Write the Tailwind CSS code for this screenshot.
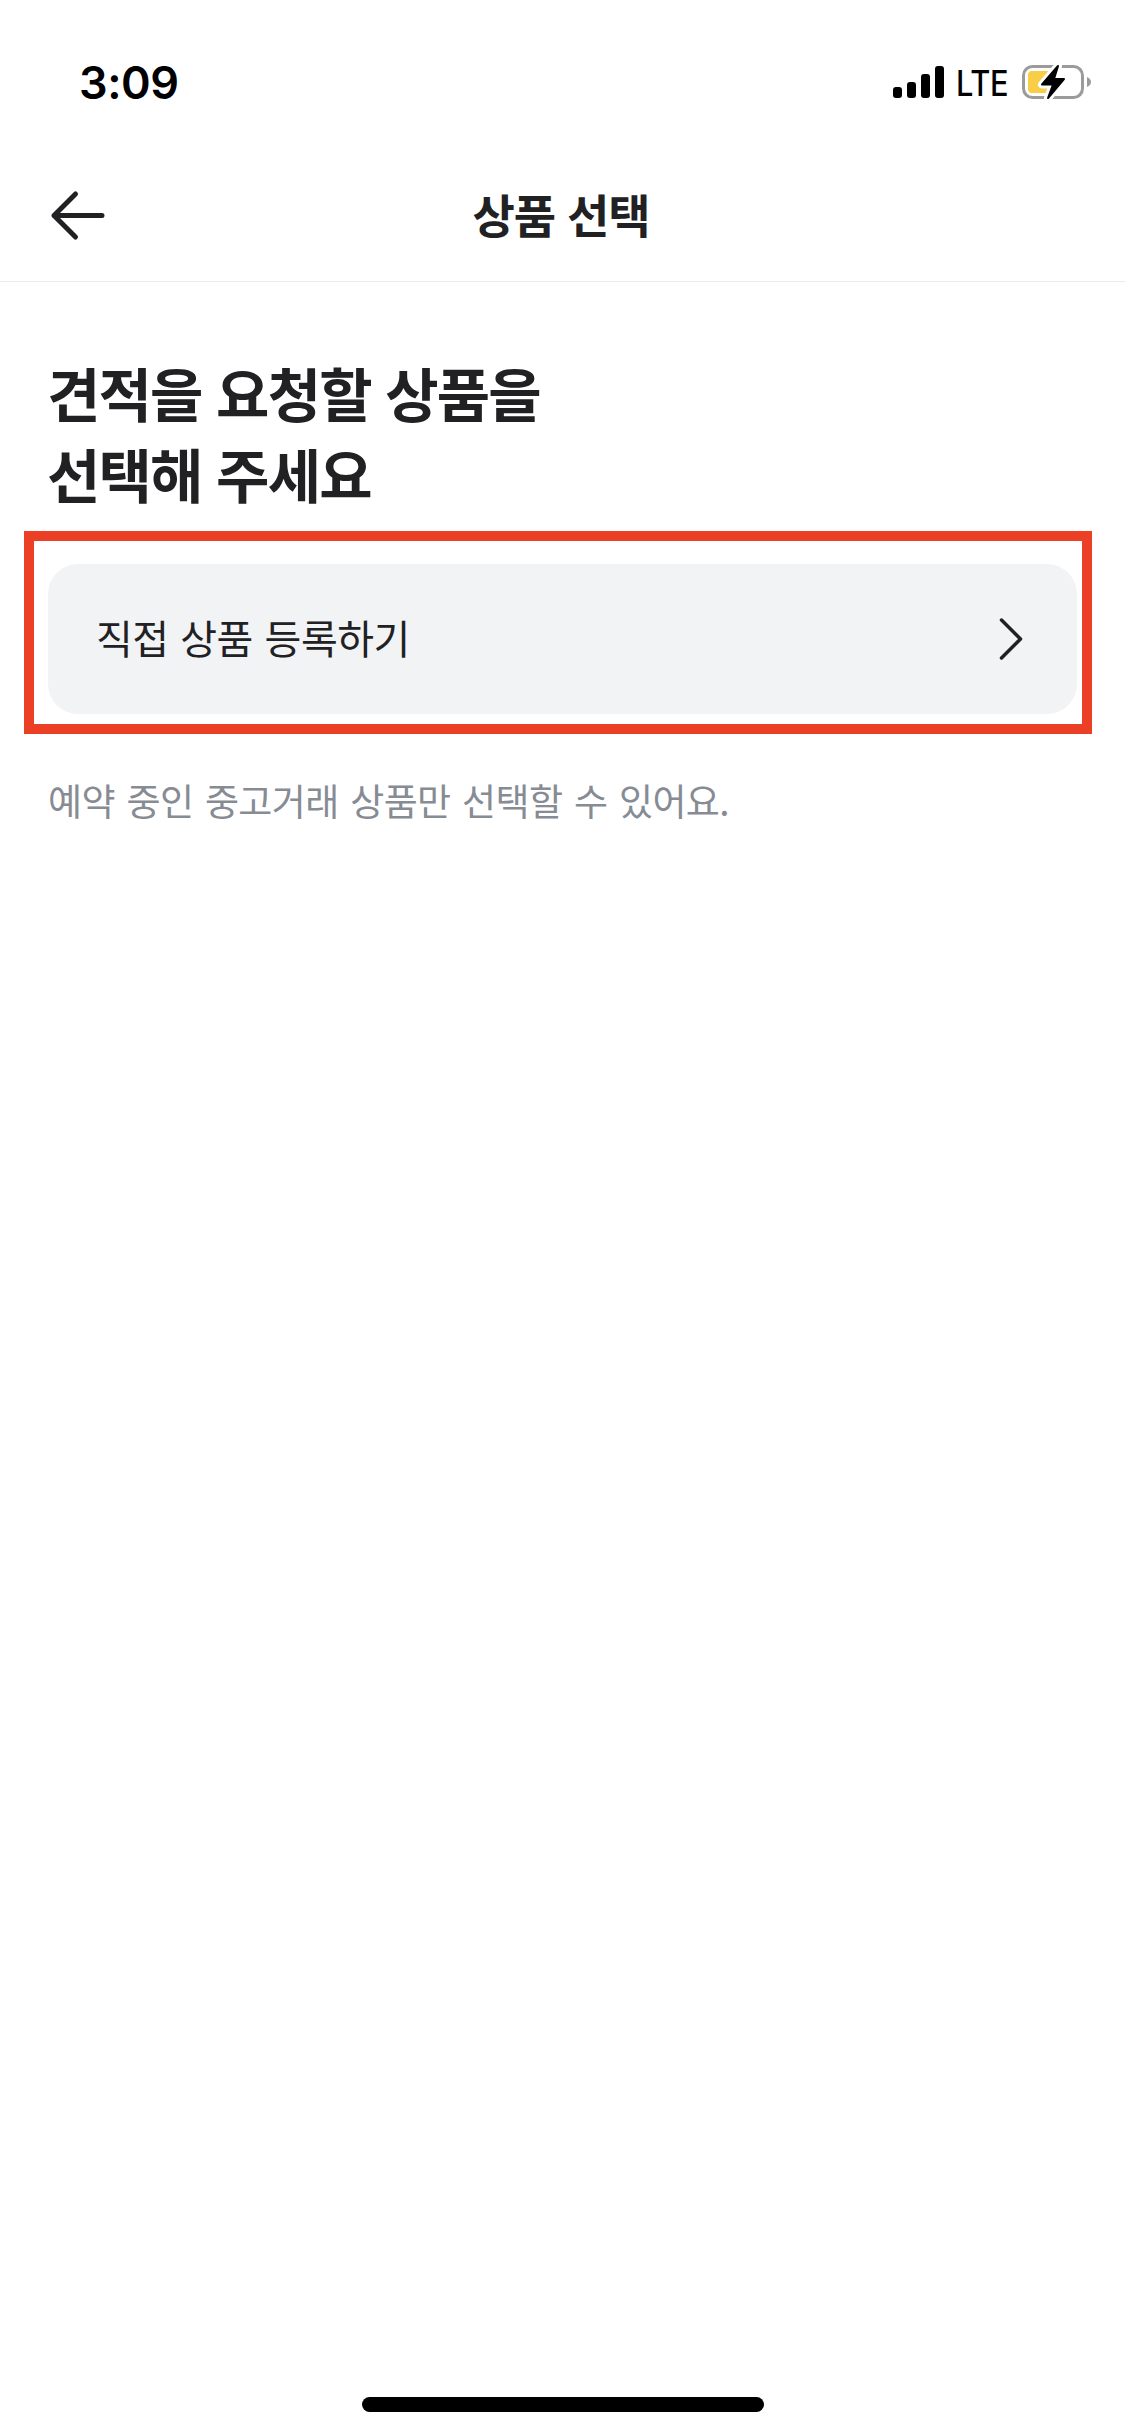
<!DOCTYPE html>
<html lang="ko">
<head>
    <meta charset="UTF-8">
    <meta name="viewport" content="width=device-width, initial-scale=1.0">
    <script src="https://cdn.jsdelivr.net/npm/@tailwindcss/browser@4"></script>
    <title>상품 선택</title>
</head>
<body class="bg-white">
    <div class="flex flex-col w-[1125px] h-[2436px] overflow-hidden text-[#212124] font-['Noto_Sans_CJK_KR',sans-serif]">
        <!-- Status bar -->
        <div class="flex items-center justify-between h-[132px] pt-8 pl-[79px] pr-[34px] text-black font-['Inter',sans-serif]">
            <span class="text-[45px] leading-none font-semibold tracking-[-0.5px]">3:09</span>
            <div class="flex items-center">
                <svg class="w-[51px] h-8" viewBox="0 0 51 32">
                    <rect x="0" y="21" width="9" height="11" rx="3"/>
                    <rect x="14" y="16" width="9" height="16" rx="3"/>
                    <rect x="28" y="8" width="9" height="24" rx="3"/>
                    <rect x="42" y="0" width="9" height="32" rx="3"/>
                </svg>
                <span class="ml-3 pt-0.5 w-[52px] origin-left scale-x-[0.88] text-[35px] leading-none font-medium tracking-[-0.3px]">LTE</span>
                <!-- Battery, charging -->
                <svg class="ml-[14px] w-[69px] h-9" viewBox="0 0 69 36">
                    <rect x="1.5" y="2.5" width="59" height="31" rx="9" fill="none" stroke="#9b9b9b" stroke-width="3"/>
                    <rect x="6" y="7" width="22" height="22" rx="4" fill="#f7ce46"/>
                    <path d="M65 13c2.600 1 4 3 4 5s-1.400 4-4 5z" fill="#9b9b9b"/>
                    <path d="M36 2 20 20.500h11L26 34l16-19H32z" fill="#000" stroke="#fff" stroke-width="8" stroke-linejoin="round"/>
                    <path d="M36 2 20 20.500h11L26 34l16-19H32z" fill="#000" stroke="#000" stroke-width="2" stroke-linejoin="round"/>
                </svg>
            </div>
        </div>

        <!-- Header -->
        <header class="grid grid-cols-3 items-center h-[150px] pt-[13px] px-12 border-b border-[#eaebee]">
            <a href="#" aria-label="뒤로">
                <svg class="w-[60px] h-[60px]" viewBox="0 0 60 60" fill="none" stroke="#212124" stroke-width="5" stroke-linecap="round" stroke-linejoin="round">
                    <path d="M27.500 11 6 32.500 27.500 54M6 32.500h48"/>
                </svg>
            </a>
            <h1 class="pr-[3px] text-center text-[46px] leading-none font-bold tracking-[-1px]">상품 선택</h1>
        </header>

        <!-- Content -->
        <main class="flex-1">
            <h2 class="mt-[70px] ml-[47px] text-[58px] leading-[81px] font-bold tracking-[-1.8px]">견적을 요청할 상품을<br>선택해 주세요</h2>
            <div class="mt-[17px] ml-6 w-[1068px] h-[203px] border-[10px] border-[#eb4026] pt-[23px] pl-[14px]">
                <button class="flex items-center justify-between w-[1029px] h-[150px] rounded-[30px] bg-[#f2f3f5] pl-12 pr-[54px] text-[40px] leading-none tracking-[-0.5px] [word-spacing:1px]">
                    <span class="pb-[5px]">직접 상품 등록하기</span>
                    <svg class="w-[24px] h-[42px]" viewBox="0 0 24 42" fill="none" stroke="#212124" stroke-width="3.500" stroke-linecap="round" stroke-linejoin="round">
                        <path d="m2.500 2 19 19-19 19"/>
                    </svg>
                </button>
            </div>
            <p class="mt-[39px] ml-12 text-[37px] leading-[54px] tracking-[-0.6px] [word-spacing:1.8px] text-[#868b94]">예약 중인 중고거래 상품만 선택할 수 있어요.</p>
        </main>

        <!-- Home indicator -->
        <div class="mx-auto mb-6 w-[402px] h-[15px] rounded-full bg-black"></div>
    </div>
</body>
</html>
